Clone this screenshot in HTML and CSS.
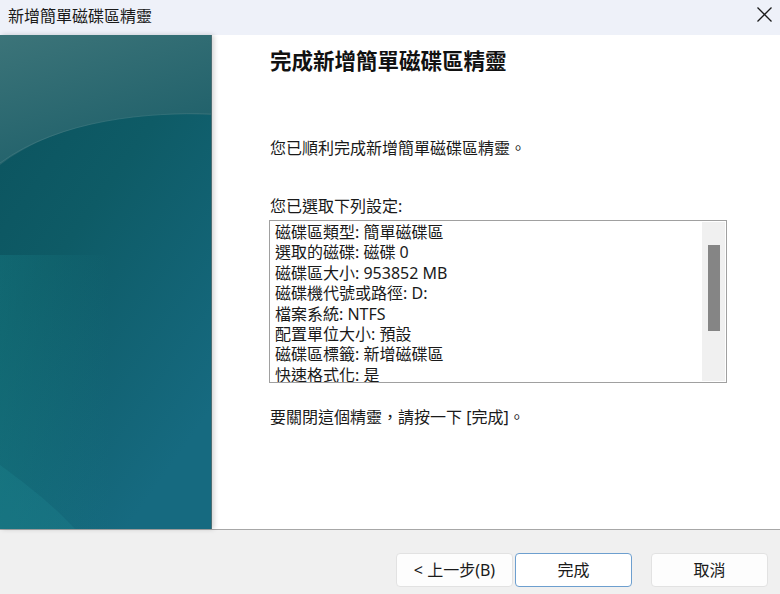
FILE: index.html
```html
<!DOCTYPE html>
<html lang="zh-TW">
<head>
<meta charset="utf-8">
<title>新增簡單磁碟區精靈</title>
<link rel="stylesheet" href="styles.css">
</head>
<body>
<div class="window">
  <div class="titlebar">
    <span class="title">新增簡單磁碟區精靈</span>
    <button class="close" aria-label="關閉">
      <svg width="15" height="15" viewBox="0 0 15 15"><path d="M0.5 0.5 L14.5 14.5 M14.5 0.5 L0.5 14.5" stroke="#1b1b1b" stroke-width="1.3" fill="none"/></svg>
    </button>
  </div>
  <div class="main">
    <div class="side">
      <svg class="art" width="211" height="494" viewBox="0 0 211 494" preserveAspectRatio="none">
        <defs>
          <linearGradient id="base" x1="0" y1="0" x2="0.6" y2="1">
            <stop offset="0" stop-color="#0b525d"/>
            <stop offset="0.45" stop-color="#0e5b66"/>
            <stop offset="1" stop-color="#166a80"/>
          </linearGradient>
          <linearGradient id="leftglow" x1="0" y1="0" x2="1" y2="0">
            <stop offset="0" stop-color="#188088" stop-opacity="0.9"/>
            <stop offset="1" stop-color="#188088" stop-opacity="0"/>
          </linearGradient>
          <linearGradient id="top" x1="0" y1="0" x2="0.5" y2="1">
            <stop offset="0" stop-color="#3c7479"/>
            <stop offset="1" stop-color="#1f606a"/>
          </linearGradient>
        </defs>
        <rect width="211" height="494" fill="url(#base)"/>
        <rect x="0" y="220" width="110" height="274" fill="url(#leftglow)" opacity="0.4"/>
        <path d="M0 0 H211 V80 C150 76 60 84 0 130 Z" fill="url(#top)"/>
        <path d="M0 128 C60 84 150 77 211 79" stroke="#4a8086" stroke-width="1" fill="none" opacity="0.5"/>
        <path d="M0 430 C30 452 55 472 75 494 H0 Z" fill="#1f8a92" opacity="0.28"/>
      </svg>
    </div>
    <div class="content">
      <h1 class="heading">完成新增簡單磁碟區精靈</h1>
      <p class="text intro">您已順利完成新增簡單磁碟區精靈。</p>
      <p class="text label">您已選取下列設定:</p>
      <div class="listbox">
        <div class="list-lines">
          <div class="line">磁碟區類型: 簡單磁碟區</div>
          <div class="line">選取的磁碟: 磁碟 0</div>
          <div class="line">磁碟區大小: 953852 MB</div>
          <div class="line">磁碟機代號或路徑: D:</div>
          <div class="line">檔案系統: NTFS</div>
          <div class="line">配置單位大小: 預設</div>
          <div class="line">磁碟區標籤: 新增磁碟區</div>
          <div class="line">快速格式化: 是</div>
        </div>
        <div class="scrollbar"><div class="thumb"></div></div>
      </div>
      <p class="text closing">要關閉這個精靈，請按一下 [完成]。</p>
    </div>
  </div>
  <div class="footer">
    <button class="btn">&lt; 上一步(B)</button>
    <button class="btn primary">完成</button>
    <button class="btn cancel">取消</button>
  </div>
</div>
</body>
</html>
```
FILE: styles.css
```css
html, body {
  margin: 0;
  padding: 0;
}
body {
  font-family: "Noto Sans", "Noto Sans CJK TC", sans-serif;
  color: #1a1a1a;
  background: #ffffff;
}
.window {
  width: 780px;
  height: 594px;
  display: flex;
  flex-direction: column;
  overflow: hidden;
}
.titlebar {
  height: 35px;
  flex: none;
  background: #eef1f9;
  display: flex;
  align-items: center;
  justify-content: space-between;
  padding-left: 8px;
  box-sizing: border-box;
}
.title {
  font-size: 16px;
  line-height: 20px;
  margin-top: -6px;
  color: #1a1a1a;
  font-family: "Noto Sans CJK TC", sans-serif;
}
.close {
  border: none;
  background: transparent;
  width: 46px;
  height: 35px;
  padding: 0;
  display: flex;
  align-items: center;
  justify-content: center;
  margin-top: -7px;
  margin-right: -7px;
}
.main {
  height: 495px;
  flex: none;
  display: flex;
  border-bottom: 1px solid #a7a7a7;
  box-sizing: border-box;
  background: #ffffff;
}
.side {
  width: 211px;
  flex: none;
  box-shadow: 2px 0 5px rgba(0, 0, 0, 0.18);
  position: relative;
  border-right: 1px solid #4d6f74;
  box-sizing: content-box;
}
.art {
  display: block;
}
.content {
  flex: 1;
  padding: 11px 0 0 58px;
}
.heading {
  margin: 0;
  font-family: "Noto Sans CJK TC", sans-serif;
  font-size: 21.5px;
  line-height: 28px;
  font-weight: 700;
  color: #111111;
}
.text {
  margin: 0;
  font-size: 16px;
  line-height: 22px;
  color: #1a1a1a;
}
.intro {
  margin-top: 63px;
}
.label {
  margin-top: 36px;
}
.listbox {
  margin: 3px 0 0 -1px;
  width: 458px;
  height: 163px;
  border: 1px solid #a0a0a0;
  box-sizing: border-box;
  display: flex;
  overflow: hidden;
}
.list-lines {
  flex: 1;
  padding: 1px 0 0 5px;
  overflow: hidden;
}
.line {
  font-size: 16px;
  line-height: 20.4px;
  white-space: nowrap;
  color: #1a1a1a;
}
.scrollbar {
  width: 23px;
  flex: none;
  margin: 1px 1px 1px 0;
  background: #f0f0f0;
  padding-top: 23px;
  box-sizing: border-box;
  display: flex;
  justify-content: center;
}
.thumb {
  width: 12px;
  height: 86px;
  background: #858585;
}
.closing {
  margin-top: 23px;
}
.footer {
  flex: 1;
  background: #f0f0f0;
  display: flex;
  align-items: flex-start;
  padding: 23px 12px 0 0;
  justify-content: flex-end;
  box-sizing: border-box;
}
.btn {
  width: 117px;
  height: 34px;
  box-sizing: border-box;
  border: 1px solid #e2e2e2;
  border-radius: 4px;
  background: #fdfdfd;
  font-family: "Noto Sans", "Noto Sans CJK TC", sans-serif;
  font-size: 16px;
  color: #1a1a1a;
  padding: 0;
  line-height: 20px;
}
.primary {
  margin-left: 2px;
  border-color: #6d9fcf;
  background: #ffffff;
}
.cancel {
  margin-left: 19px;
}
```
